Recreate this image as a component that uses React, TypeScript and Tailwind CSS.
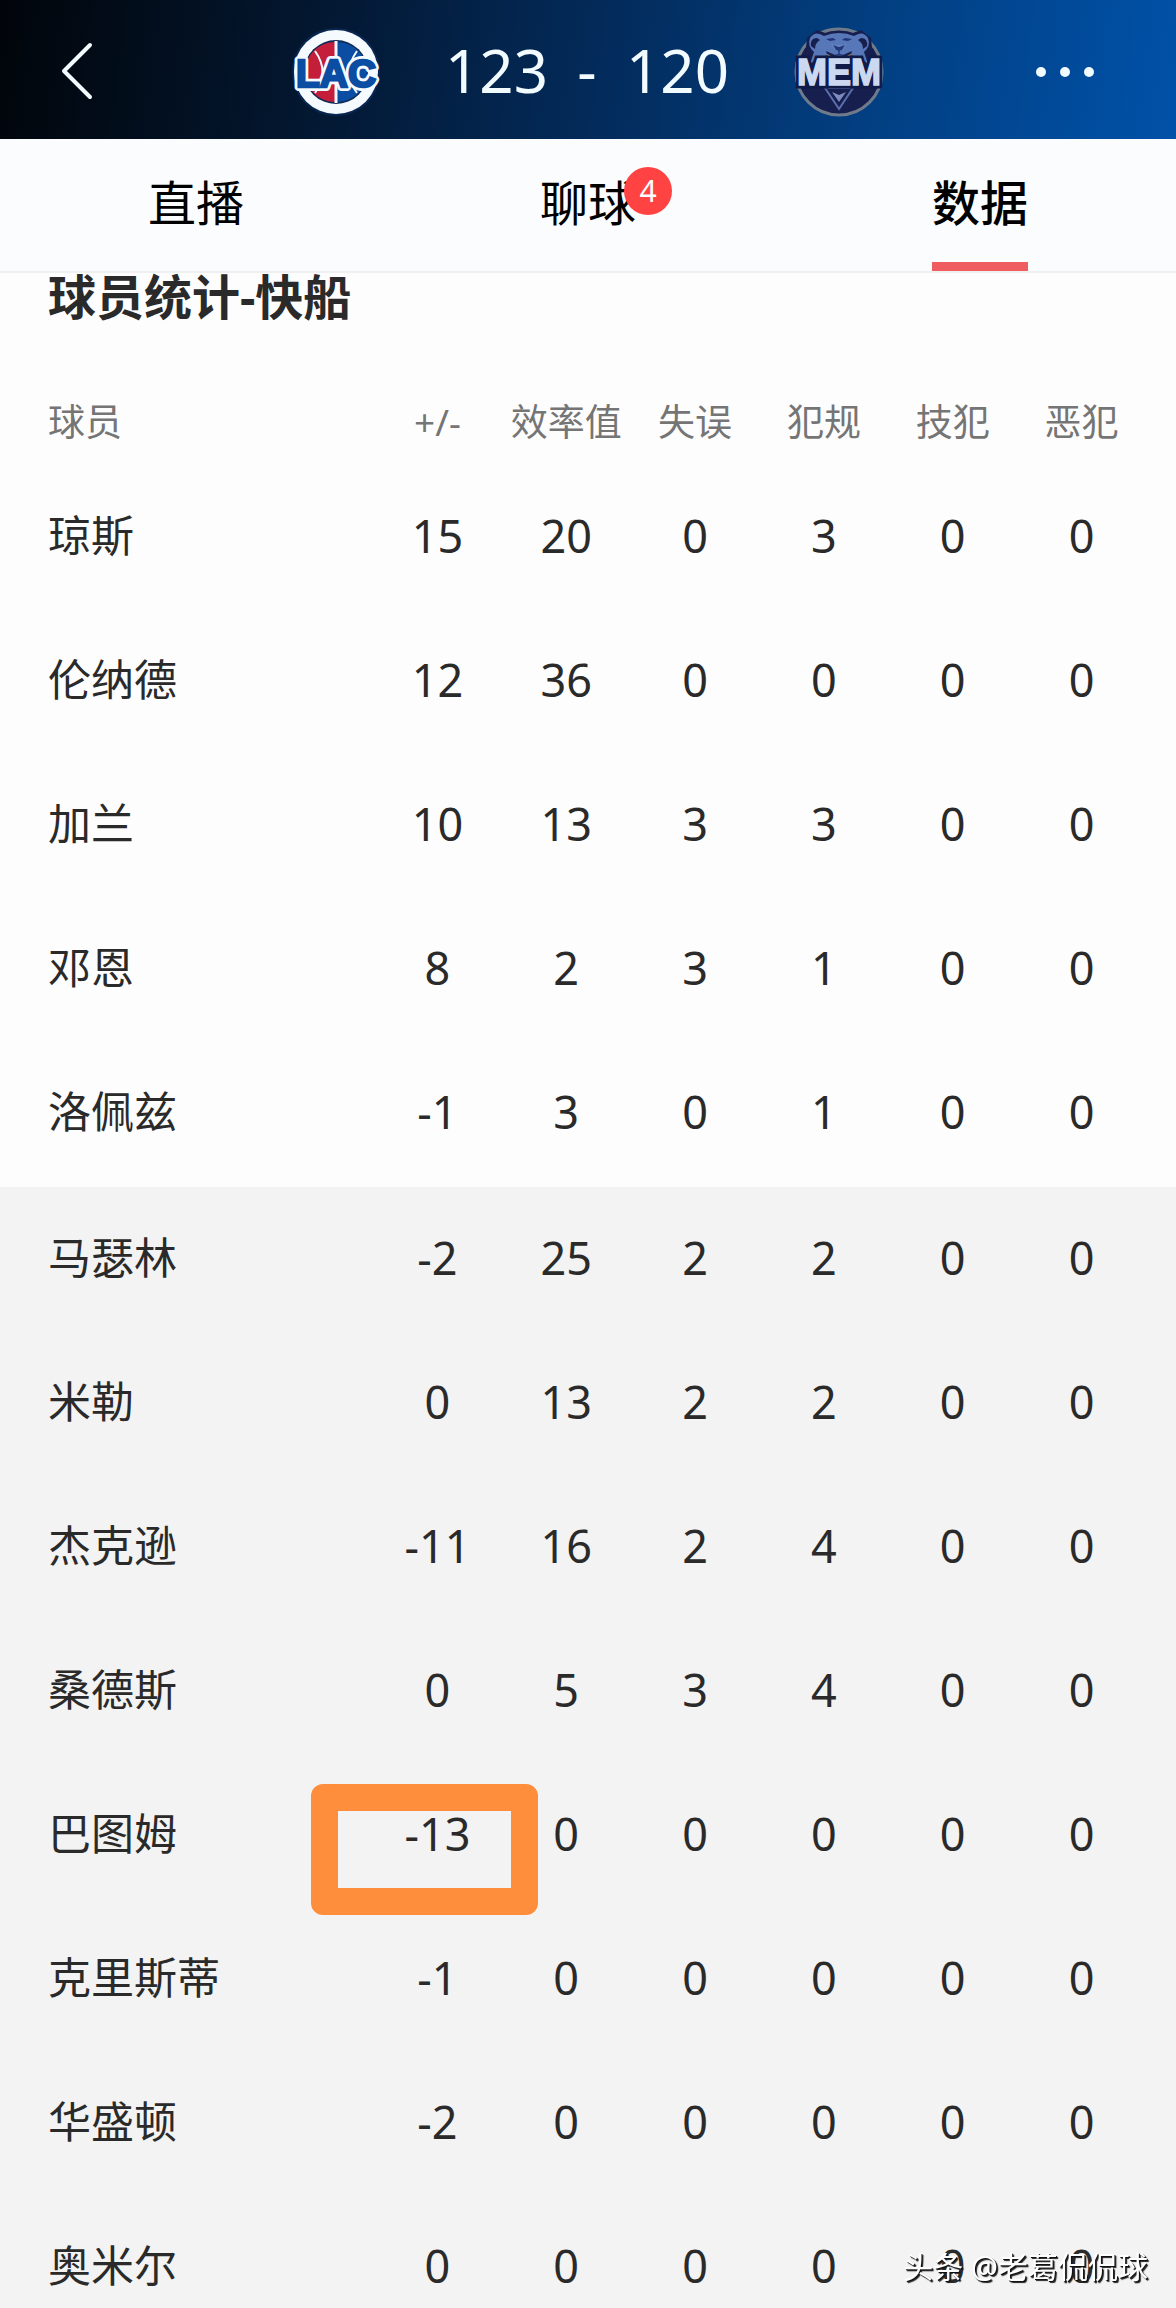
import { clsx } from 'clsx'

const COLUMNS = ['+/-', '效率值', '失误', '犯规', '技犯', '恶犯']

type Player = { name: string; stats: number[]; marked?: boolean }

const STARTERS: Player[] = [
  { name: '琼斯', stats: [15, 20, 0, 3, 0, 0] },
  { name: '伦纳德', stats: [12, 36, 0, 0, 0, 0] },
  { name: '加兰', stats: [10, 13, 3, 3, 0, 0] },
  { name: '邓恩', stats: [8, 2, 3, 1, 0, 0] },
  { name: '洛佩兹', stats: [-1, 3, 0, 1, 0, 0] },
]

const BENCH: Player[] = [
  { name: '马瑟林', stats: [-2, 25, 2, 2, 0, 0] },
  { name: '米勒', stats: [0, 13, 2, 2, 0, 0] },
  { name: '杰克逊', stats: [-11, 16, 2, 4, 0, 0] },
  { name: '桑德斯', stats: [0, 5, 3, 4, 0, 0] },
  { name: '巴图姆', stats: [-13, 0, 0, 0, 0, 0], marked: true },
  { name: '克里斯蒂', stats: [-1, 0, 0, 0, 0, 0] },
  { name: '华盛顿', stats: [-2, 0, 0, 0, 0, 0] },
  { name: '奥米尔', stats: [0, 0, 0, 0, 0, 0] },
]

const ClippersLogo = () => (
  <svg width="90" height="90" viewBox="0 0 90 90" role="img" aria-label="LAC">
    <circle cx="45" cy="45" r="44" fill="#0c2c5c" opacity=".7"/>
    <circle cx="45" cy="45" r="42" fill="#f5faff"/>
    <circle cx="45" cy="45" r="32" fill="#0e2a55"/>
    <path d="M44 15a30 30 0 0 0 0 60z" fill="#c41e3a"/>
    <path d="M46 15a30 30 0 0 1 0 60z" fill="#0b4da2"/>
    <g stroke="#f5faff" fill="none">
      <path d="M45 14v62" strokeWidth="3"/>
      <path d="M24 24q15 21 0 42M66 24q-15 21 0 42" strokeWidth="2"/>
    </g>
    <text x="45" y="60" textAnchor="middle" fontFamily="Liberation Sans, sans-serif" fontWeight="700" fontSize="39" fill="#0b4da2" stroke="#f5faff" strokeWidth="8" strokeLinejoin="round" paintOrder="stroke">LAC</text>
    <text x="45" y="60" textAnchor="middle" fontFamily="Liberation Sans, sans-serif" fontWeight="700" fontSize="39" fill="#0b4da2" stroke="#0b4da2" strokeWidth="2.4" aria-hidden="true">LAC</text>
  </svg>
)

const GrizzliesLogo = () => (
  <svg width="92" height="92" viewBox="0 0 92 92" role="img" aria-label="MEM">
    <circle cx="46" cy="46" r="43" fill="#161f4d" stroke="#6f7a8a" strokeWidth="3"/>
    {/* bear head */}
    <path d="M12 31L14 12L24 4L35 8L57 8L68 4L78 12L80 31L76 42H16z" fill="#161f4d"/>
    <path d="M21 26Q14 20 17 12Q22 4 31 10Q38 7 46 7Q54 7 61 10Q70 4 75 12Q78 20 71 26L75 38L70 34L70 41L65 35L62 42H30L27 35L22 41L22 34L17 38z" fill="#5777b8"/>
    <path d="M18 20Q17 12 24 12L27 14Q22 17 22 23zM74 20Q75 12 68 12L65 14Q70 17 70 23z" fill="#161f4d"/>
    <path d="M33 13l7-1 3 2-6 1zM59 13l-7-1-3 2 6 1z" fill="#1f3475"/>
    <path d="M38 18q8 2 16 0l-4 6-4 1-4-1z" fill="#6786c4"/>
    <path d="M40 19l6 2 6-2-3 5-3 1-3-1z" fill="#24397a"/>
    <path d="M46 23v6M41 30q5-3 10 0" fill="none" stroke="#263b7c" strokeWidth="1.5"/>
    <path d="M33 25l9 4v6l-7-3zM59 25l-9 4v6l7-3z" fill="#182352"/>
    <path d="M34 28l6 3-5 1zM58 28l-6 3 5 1z" fill="#e6b35c"/>
    {/* chin */}
    <path d="M32 62L46 83L60 62z" fill="none" stroke="#5c6fae" strokeWidth="2"/>
    <path d="M39 66L46 76L53 66L46 69z" fill="#7d8bc0"/>
    <text x="46" y="59" textAnchor="middle" fontFamily="Liberation Sans, sans-serif" fontWeight="700" fontSize="36" fill="#cbd8ef" stroke="#101b48" strokeWidth="7" paintOrder="stroke">MEM</text>
    <text x="46" y="59" textAnchor="middle" fontFamily="Liberation Sans, sans-serif" fontWeight="700" fontSize="36" fill="#cbd8ef" stroke="#cbd8ef" strokeWidth="1.5" aria-hidden="true">MEM</text>
  </svg>
)

function ScoreHeader() {
  return (
    <header className="relative flex h-[139px] shrink-0 items-center justify-center bg-[linear-gradient(98deg,#01050a_0%,#03162e_25%,#032a59_50%,#023f82_74%,#0051a8_100%)] text-[#f2fbff]">
      <button aria-label="返回" className="absolute left-14 flex h-16 w-12 items-center">
        <svg width="42" height="60" viewBox="0 0 42 60" fill="none" stroke="currentColor" strokeWidth="4" strokeLinecap="round" strokeLinejoin="round">
          <path d="M34 5L8 31L34 57"/>
        </svg>
      </button>
      <div className="flex items-center gap-16 pt-1">
        <ClippersLogo />
        <div className="flex w-[284px] items-center justify-between pb-1 text-[60px] leading-[72px]">
          <span>123</span>
          <span>-</span>
          <span>120</span>
        </div>
        <GrizzliesLogo />
      </div>
      <button aria-label="更多" className="absolute right-[82px] flex h-16 items-center gap-3.5 pt-1">
        <span className="size-2.5 rounded-full bg-current" />
        <span className="size-2.5 rounded-full bg-current" />
        <span className="size-2.5 rounded-full bg-current" />
      </button>
    </header>
  )
}

function Tabs() {
  return (
    <nav className="grid shrink-0 grid-cols-3 border-b-2 border-[#eff1f1] bg-[#fbfcfd] text-[48px] leading-[56px] text-black">
      <button className="flex h-[132px] items-center justify-center pb-1">直播</button>
      <button className="flex h-[132px] items-center justify-center pb-1">
        <span className="relative">
          聊球
          <span className="absolute -top-2 -right-9 flex size-12 items-center justify-center rounded-full bg-[#ff4342] text-[30px] leading-8 text-white">4</span>
        </span>
      </button>
      <button aria-current="page" className="relative flex h-[132px] items-center justify-center pb-1 font-medium">
        数据
        <span className="absolute bottom-0 h-[9px] w-24 bg-[#ef5d60]" />
      </button>
    </nav>
  )
}

function PlayerRow({ player }: { player: Player }) {
  return (
    <tr className="h-[144px]">
      <th scope="row" className="pl-12 text-left text-[43px] font-normal">{player.name}</th>
      {player.stats.map((value, i) => (
        <td key={i} className={clsx('text-center text-[45px]', player.marked && i === 0 && 'relative')}>
          {value}
          {player.marked && i === 0 && (
            <span className="absolute top-[21px] -right-9 -left-[62px] h-[131px] rounded-xl border-[27px] border-[#ff8e3c]" />
          )}
        </td>
      ))}
      <td />
    </tr>
  )
}

export default function App() {
  return (
    <div className="flex h-screen flex-col overflow-hidden bg-[#fdfdfd] font-['Noto_Sans','Noto_Sans_CJK_SC',sans-serif] text-[#2a2a2a]" lang="zh-CN">
      <ScoreHeader />
      <Tabs />
      <main className="min-h-0 flex-1">
        <h2 className="pl-12 text-[48px] leading-[48px] font-bold">球员统计-快船</h2>
        <table className="mt-14 w-full table-fixed border-collapse leading-[56px]">
          <colgroup>
            <col className="w-[373px]" />
            {COLUMNS.map((label) => <col key={label} />)}
            <col className="w-[30px]" />
          </colgroup>
          <thead className="text-[37px] whitespace-nowrap text-[#757575]">
            <tr className="h-[90px]">
              <th scope="col" className="pl-12 text-left font-normal">球员</th>
              {COLUMNS.map((label) => (
                <th key={label} scope="col" className="font-normal">
                  <span className="flex justify-center">{label}</span>
                </th>
              ))}
              <td />
            </tr>
          </thead>
          <tbody className="[&>tr>*]:pb-1.5">
            {STARTERS.map((p) => <PlayerRow key={p.name} player={p} />)}
          </tbody>
          <tbody className="bg-[#f3f3f3] [&>tr>*]:pb-0.5">
            {BENCH.map((p) => <PlayerRow key={p.name} player={p} />)}
          </tbody>
        </table>
      </main>
      <p className="fixed right-7 bottom-[21px] text-[30px] leading-[40px] text-white [text-shadow:1px_1px_0_#111,2px_2px_1px_#222]">头条 @老葛侃侃球</p>
    </div>
  )
}
